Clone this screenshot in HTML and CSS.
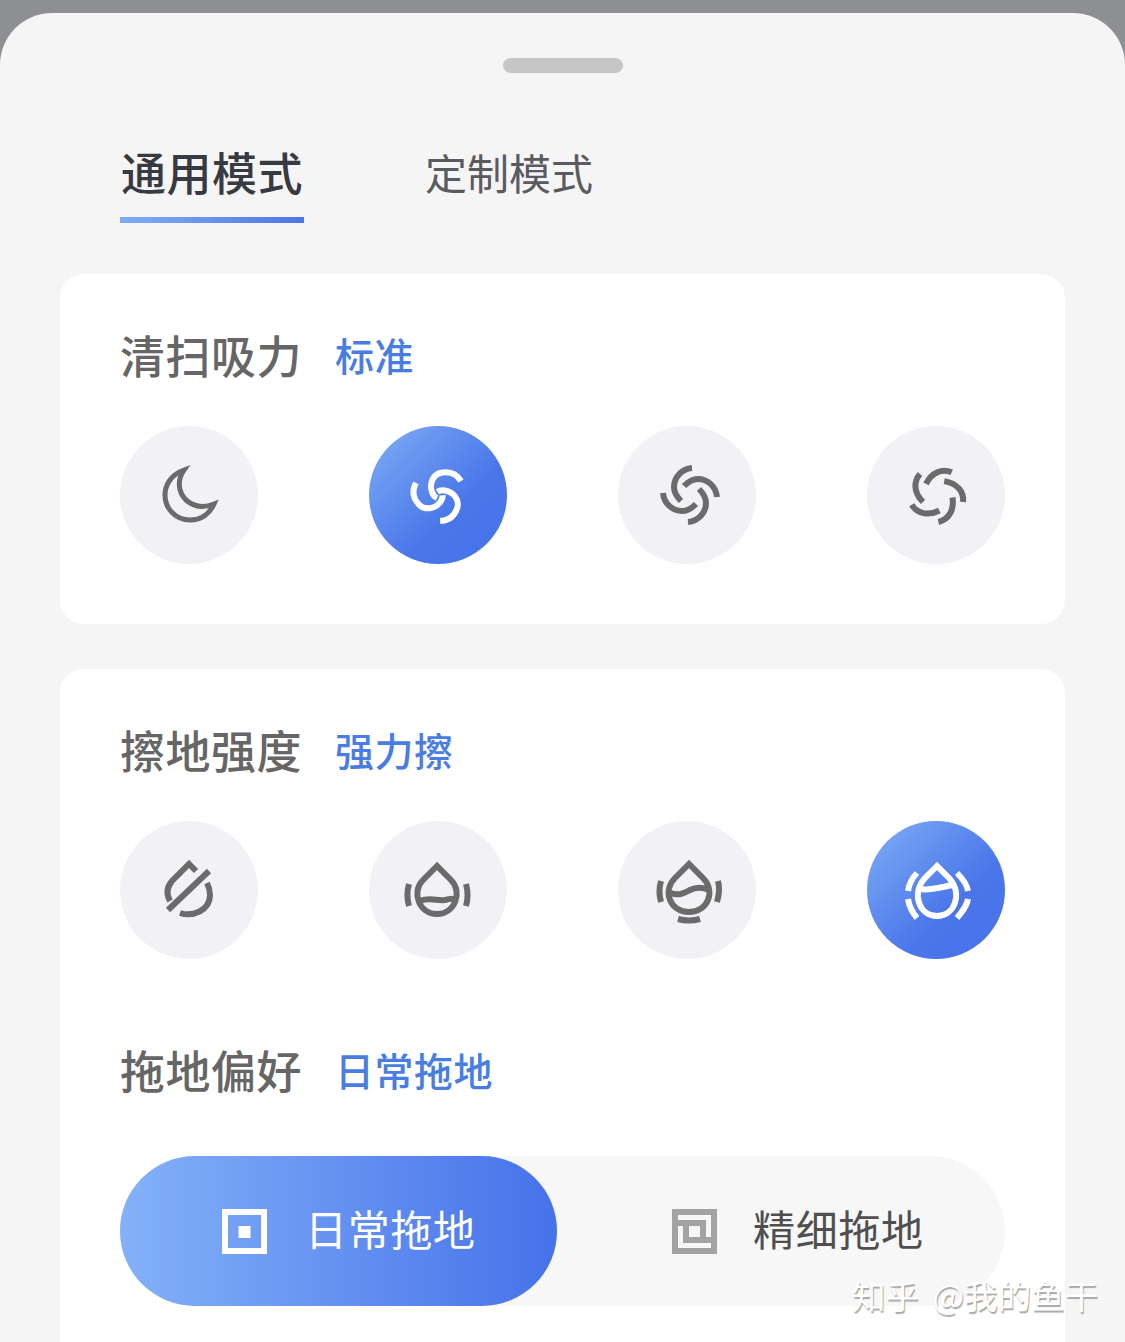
FILE: index.html

```html
<!DOCTYPE html>
<html lang="zh-CN">
<head>
  <meta charset="UTF-8">
  <title>模式设置</title>
  <link rel="stylesheet" href="styles.css">
</head>
<body>
  <div class="sheet">
    <div class="handle"></div>

    <div class="tabs">
      <div class="tab active">通用模式</div>
      <div class="tab">定制模式</div>
    </div>

    <div class="card card-suction">
      <div class="title-row">
        <span class="title">清扫吸力</span>
        <span class="value">标准</span>
      </div>
      <div class="circles">
        <div class="circle">
          <svg class="ic" viewBox="0 0 138 138">
            <path class="thin" d="M64 44C50 49 45 60 45 69C45 83 56 94 70 94C82 94 90 87 94 78C84 82 74 81 66 74C58 66 57 54 64 44Z"/>
          </svg>
        </div>
        <div class="circle on">
          <svg class="ic" viewBox="0 0 138 138">
            <g id="arm3" transform="translate(1 0)">
              <path d="M91 55C86 47 78 45 70 47C63 49 59 58 62 66C63 69 65 71 67 72"/>
            </g>
            <use href="#arm3" transform="rotate(120 70 69)"/>
            <use href="#arm3" transform="rotate(240 70 69)"/>
          </svg>
        </div>
        <div class="circle">
          <svg class="ic" viewBox="0 0 138 138">
            <g transform="translate(3 0)">
              <path id="arm4" d="M71 42C60 43 53 52 53 61C53 66 56 71 60 75"/>
              <use href="#arm4" transform="rotate(90 69 69)"/>
              <use href="#arm4" transform="rotate(180 69 69)"/>
              <use href="#arm4" transform="rotate(270 69 69)"/>
            </g>
          </svg>
        </div>
        <div class="circle">
          <svg class="ic" viewBox="0 0 138 138">
            <g transform="translate(1 0)">
              <path id="arm5" d="M52 48C45 56 46 67 55 76"/>
              <use href="#arm5" transform="rotate(72 69 69)"/>
              <use href="#arm5" transform="rotate(144 69 69)"/>
              <use href="#arm5" transform="rotate(216 69 69)"/>
              <use href="#arm5" transform="rotate(288 69 69)"/>
            </g>
          </svg>
        </div>
      </div>
    </div>

    <div class="card card-mop">
      <div class="title-row">
        <span class="title">擦地强度</span>
        <span class="value">强力擦</span>
      </div>
      <div class="circles">
        <div class="circle">
          <svg class="ic" viewBox="0 0 138 138">
            <path d="M48 89L89 50"/>
            <path d="M76 50L69 43L52 60C47 66 46 73 50 80"/>
            <path d="M60 92C72 96 90 90 90 74C90 70 89 66 87 62"/>
          </svg>
        </div>
        <div class="circle">
          <svg class="ic" viewBox="0 0 138 138">
            <path d="M68 45L54 59C42 71 50 93 68 93C86 93 94 71 82 59Z"/>
            <path d="M51 80C60 76 68 80 76 79C80 78 84 77 86 79"/>
            <path d="M40 63C38 70 38 78 40 85"/>
            <path d="M97 63C99 70 99 78 97 85"/>
          </svg>
        </div>
        <div class="circle">
          <svg class="ic" viewBox="0 0 138 138">
            <path d="M71 43L57 57C44 70 52 91 71 91C90 91 98 70 85 57Z"/>
            <path d="M51 71C60 76 66 72 72 69C78 66 84 66 91 69"/>
            <path d="M43 60C41 67 41 74 43 81"/>
            <path d="M100 60C102 67 101 74 99 81"/>
            <path d="M60 98C67 100 75 100 82 98"/>
          </svg>
        </div>
        <div class="circle on">
          <svg class="ic" viewBox="0 0 138 138">
            <path d="M70 45L58 57C44 72 52 95 70 95C88 95 96 72 82 57Z"/>
            <path d="M54 68C62 70 74 66 86 64"/>
            <path d="M50 52C45 57 42 63 41 70"/>
            <path d="M90 52C95 57 100 63 101 70"/>
            <path d="M41 78C42 85 45 91 50 97"/>
            <path d="M101 78C100 85 95 91 90 97"/>
          </svg>
        </div>
      </div>

      <div class="title-row pref">
        <span class="title">拖地偏好</span>
        <span class="value">日常拖地</span>
      </div>
      <div class="toggle">
        <div class="option selected">
          <svg class="opt-ic" viewBox="0 0 45 45">
            <rect class="frame" x="3" y="3" width="39" height="39"/>
            <rect class="dot" x="16.5" y="17" width="12" height="12"/>
          </svg>
          <span>日常拖地</span>
        </div>
        <div class="option">
          <svg class="opt-ic" viewBox="0 0 45 45">
            <rect class="frame" x="3" y="3" width="39" height="39"/>
            <path class="frame" d="M5 14H31V31H14V14M31 31H40"/>
          </svg>
          <span>精细拖地</span>
        </div>
      </div>
    </div>

    <div class="watermark">知乎 @我的鱼干</div>
  </div>
</body>
</html>
```

FILE: styles.css

```css
html, body {
  margin: 0;
  height: 1342px;
  overflow: hidden;
}
body {
  background-color: #8e8f93;
  font-family: "Noto Sans CJK SC", "Noto Sans", sans-serif;
}
.sheet {
  position: relative;
  box-sizing: border-box;
  height: 1329px;
  margin-top: 13px;
  padding-top: 45px;
  background-color: #f5f5f6;
  border-radius: 52px 52px 0 0;
  overflow: hidden;
}
.handle {
  width: 120px;
  height: 15px;
  margin: 0 auto;
  border-radius: 8px;
  background-color: #c6c6c6;
}

/* tabs */
.tabs {
  display: flex;
  align-items: flex-end;
  gap: 121px;
  height: 150px;
  margin-bottom: 51px;
  padding-left: 120px;
}
.tab {
  position: relative;
  height: 87px;
  font-size: 42px;
  line-height: 72px;
  color: #5a5b5e;
}
.tab.active {
  width: 184px;
  font-size: 45px;
  font-weight: 500;
  letter-spacing: 0.5px;
  color: #373a40;
  text-align: center;
}
.tab.active::after {
  content: "";
  position: absolute;
  left: 0;
  right: 0;
  bottom: 0;
  height: 6px;
  background: linear-gradient(90deg, #7fadf2, #4a76e4);
}

/* cards */
.card {
  margin: 0 60px 45px;
  padding: 53px 60px 60px;
  background-color: #fff;
  border-radius: 24px;
}
.title-row {
  display: flex;
  align-items: center;
  height: 54px;
  margin-bottom: 45px;
}
.title {
  width: 215px;
  font-size: 45px;
  font-weight: 500;
  letter-spacing: 0.5px;
  color: #666;
}
.value {
  font-size: 39px;
  font-weight: 500;
  letter-spacing: 0.5px;
  color: #4a7de4;
}
.pref {
  margin-top: 83px;
  margin-bottom: 60px;
}
.circles {
  display: flex;
  justify-content: space-between;
}
.circle {
  width: 138px;
  height: 138px;
  border-radius: 50%;
  background-color: #f1f1f6;
  color: #6b6b6b;
}
.circle.on {
  background: linear-gradient(135deg, #82aef8 0%, #6a98f0 25%, #4a76ea 62%, #4673e8 100%);
  color: #fff;
}
.ic {
  display: block;
  width: 138px;
  height: 138px;
  fill: none;
  stroke: currentColor;
  stroke-width: 6;
}
.ic .thin {
  stroke-width: 5;
}

/* mop preference toggle */
.toggle {
  display: flex;
  height: 150px;
  border-radius: 75px;
  background-color: #f7f7f7;
}
.option {
  display: flex;
  align-items: center;
  gap: 36px;
  padding-left: 115px;
  font-size: 42px;
  letter-spacing: 0.7px;
  color: #4f4f4f;
}
.option span {
  margin-bottom: 8px;
}
.option.selected {
  box-sizing: border-box;
  width: 437px;
  gap: 38px;
  padding-left: 102px;
  border-radius: 75px;
  background: linear-gradient(90deg, #84b1f8, #4672ea);
  color: #fff;
}
.opt-ic {
  display: block;
  width: 45px;
  height: 45px;
  color: #a3a3a3;
}
.selected .opt-ic {
  color: #fff;
}
.frame {
  fill: none;
  stroke: currentColor;
  stroke-width: 6;
}
.dot {
  fill: currentColor;
}

.watermark {
  position: absolute;
  left: 852px;
  bottom: 24px;
  font-size: 33.5px;
  line-height: 46px;
  word-spacing: 6px;
  color: #fff;
  text-shadow: 1px 2px 1px #a8a8a8;
}
```
